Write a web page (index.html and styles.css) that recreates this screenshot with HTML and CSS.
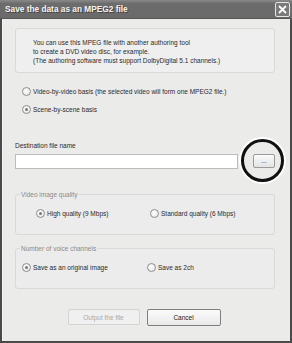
FILE: index.html
```html
<!DOCTYPE html>
<html lang="en">
<head>
<meta charset="UTF-8" />
<title>Save the data as an MPEG2 file</title>
<link rel="stylesheet" href="styles.css">
</head>
<body>

<div class="window">
  <div class="titlebar">
    <span class="title">Save the data as an MPEG2 file</span>
    <span class="close-btn">
      <svg width="9" height="9" viewBox="0 0 9 9"><path d="M1 1L8 8M8 1L1 8" stroke="#fff" stroke-width="1.8"/></svg>
    </span>
  </div>

  <div class="content">
    <div class="info">
      You can use this MPEG file with another authoring tool<br>
      to create a DVD video disc, for example.<br>
      (The authoring software must support DolbyDigital 5.1 channels.)
    </div>

    <div class="radio-list">
      <label class="radio"><span class="dot"></span>Video-by-video basis (the selected video will form one MPEG2 file.)</label>
      <label class="radio"><span class="dot checked"></span>Scene-by-scene basis</label>
    </div>

    <div class="dest-label">Destination file name</div>
    <div class="dest-row">
      <div class="text-input"></div>
      <div class="browse-wrap">
        <div class="browse-btn">...</div>
        <div class="mark"></div>
      </div>
    </div>

    <fieldset class="group quality">
      <legend>Video image quality</legend>
      <div class="group-row">
        <label class="radio col1"><span class="dot checked"></span>High quality (9 Mbps)</label>
        <label class="radio"><span class="dot"></span>Standard quality (6 Mbps)</label>
      </div>
    </fieldset>

    <fieldset class="group voice">
      <legend>Number of voice channels</legend>
      <div class="group-row">
        <label class="radio col1"><span class="dot checked"></span>Save as an original image</label>
        <label class="radio"><span class="dot"></span>Save as 2ch</label>
      </div>
    </fieldset>

    <div class="buttons">
      <div class="btn disabled">Output the file</div>
      <div class="btn">Cancel</div>
    </div>
  </div>
</div>

</body>
</html>
```

FILE: styles.css
```css
body {
  margin: 0;
  padding: 0;
  background: #fff;
  font-family: "Liberation Sans", Arial, sans-serif;
}
.window {
  width: 292px;
  height: 343px;
  box-sizing: border-box;
  background: #ebebea;
  border: 2px solid #4a4a4a;
  border-top: none;
  display: flex;
  flex-direction: column;
}
.titlebar {
  height: 19px;
  margin: 0 -2px;
  background: linear-gradient(#8a8a8a, #6c6c6c 20%, #6a6a6a);
  display: flex;
  align-items: center;
  justify-content: space-between;
  padding: 0 2px 0 5px;
  border-bottom: 1px solid #555;
  box-sizing: border-box;
}
.title {
  color: #f4f4f4;
  font-weight: bold;
  font-size: 8.3px;
  text-shadow: 1px 1px 0 #444;
}
.close-btn {
  width: 13px;
  height: 13px;
  border: 1px solid #e6e6e6;
  border-radius: 2px;
  background: #7a7a7a;
  display: flex;
  align-items: center;
  justify-content: center;
}
.content {
  flex: 1;
  padding: 9px 15px 0 12px;
  font-size: 6.5px;
  color: #2a2a2a;
  border-left: 1px solid #f4f4f4;
}
.info {
  background: #efefef;
  border: 1px solid #d9d9d9;
  border-radius: 3px;
  line-height: 9px;
  padding: 9px 0 7px 17px;
}
.radio-list {
  display: flex;
  flex-direction: column;
  padding: 9px 0 0 7px;
}
.radio {
  display: flex;
  align-items: center;
  height: 18px;
  gap: 2px;
  white-space: nowrap;
}
.dot {
  width: 7px;
  height: 7px;
  border: 1px solid #8e8e8e;
  border-radius: 50%;
  background: radial-gradient(circle at 40% 40%, #fff, #e2e2e2);
  position: relative;
  flex: none;
}
.dot.checked::after {
  content: "";
  position: absolute;
  left: 2px;
  top: 2px;
  width: 3px;
  height: 3px;
  border-radius: 50%;
  background: #777;
}
.dest-label {
  margin-top: 23px;
  line-height: 9px;
}
.dest-row {
  display: flex;
  align-items: flex-start;
  margin-top: 4px;
  gap: 15px;
}
.text-input {
  width: 223px;
  height: 15px;
  box-sizing: border-box;
  background: #fff;
  border: 1px solid #bcbcbc;
}
.browse-wrap {
  position: relative;
}
.browse-btn {
  width: 22px;
  height: 14px;
  box-sizing: border-box;
  border: 1px solid #9a9a9a;
  border-radius: 2px;
  background: linear-gradient(#fafafa, #e4e4e4);
  text-align: center;
  line-height: 11px;
  font-size: 6.5px;
}
.mark {
  position: absolute;
  left: -12px;
  top: -15px;
  width: 37px;
  height: 37px;
  border: 3px solid #111;
  border-radius: 50%;
  box-shadow: 0 0 0 2px #fff;
}
.group {
  margin: 21px 0 0;
  padding: 0;
  border: 1px solid #d9d9d9;
  border-radius: 3px;
  background: #ececec;
  min-width: 0;
}
.group legend {
  color: #8a8a8a;
  line-height: 9px;
  padding: 0 1px;
  margin-left: 4px;
}
.group-row {
  display: flex;
  height: 18px;
  margin: 5px 0 12px;
}
.quality .group-row {
  padding-left: 20px;
}
.quality .col1 {
  width: 114px;
}
.voice {
  margin-top: 9px;
}
.voice .group-row {
  padding-left: 6px;
}
.voice .col1 {
  width: 125px;
}
.buttons {
  display: flex;
  justify-content: center;
  gap: 7px;
  margin-top: 20px;
  padding-right: 2px;
}
.btn {
  width: 74px;
  height: 17px;
  box-sizing: border-box;
  border: 1px solid #7e7e7e;
  border-radius: 2px;
  background: linear-gradient(#fbfbfb, #e9e9e9);
  text-align: center;
  line-height: 15px;
  color: #222;
}
.btn.disabled {
  width: 72px;
  height: 16px;
  border-color: #d4d4d4;
  background: #f0f0f0;
  color: #a8a8a8;
}
```
